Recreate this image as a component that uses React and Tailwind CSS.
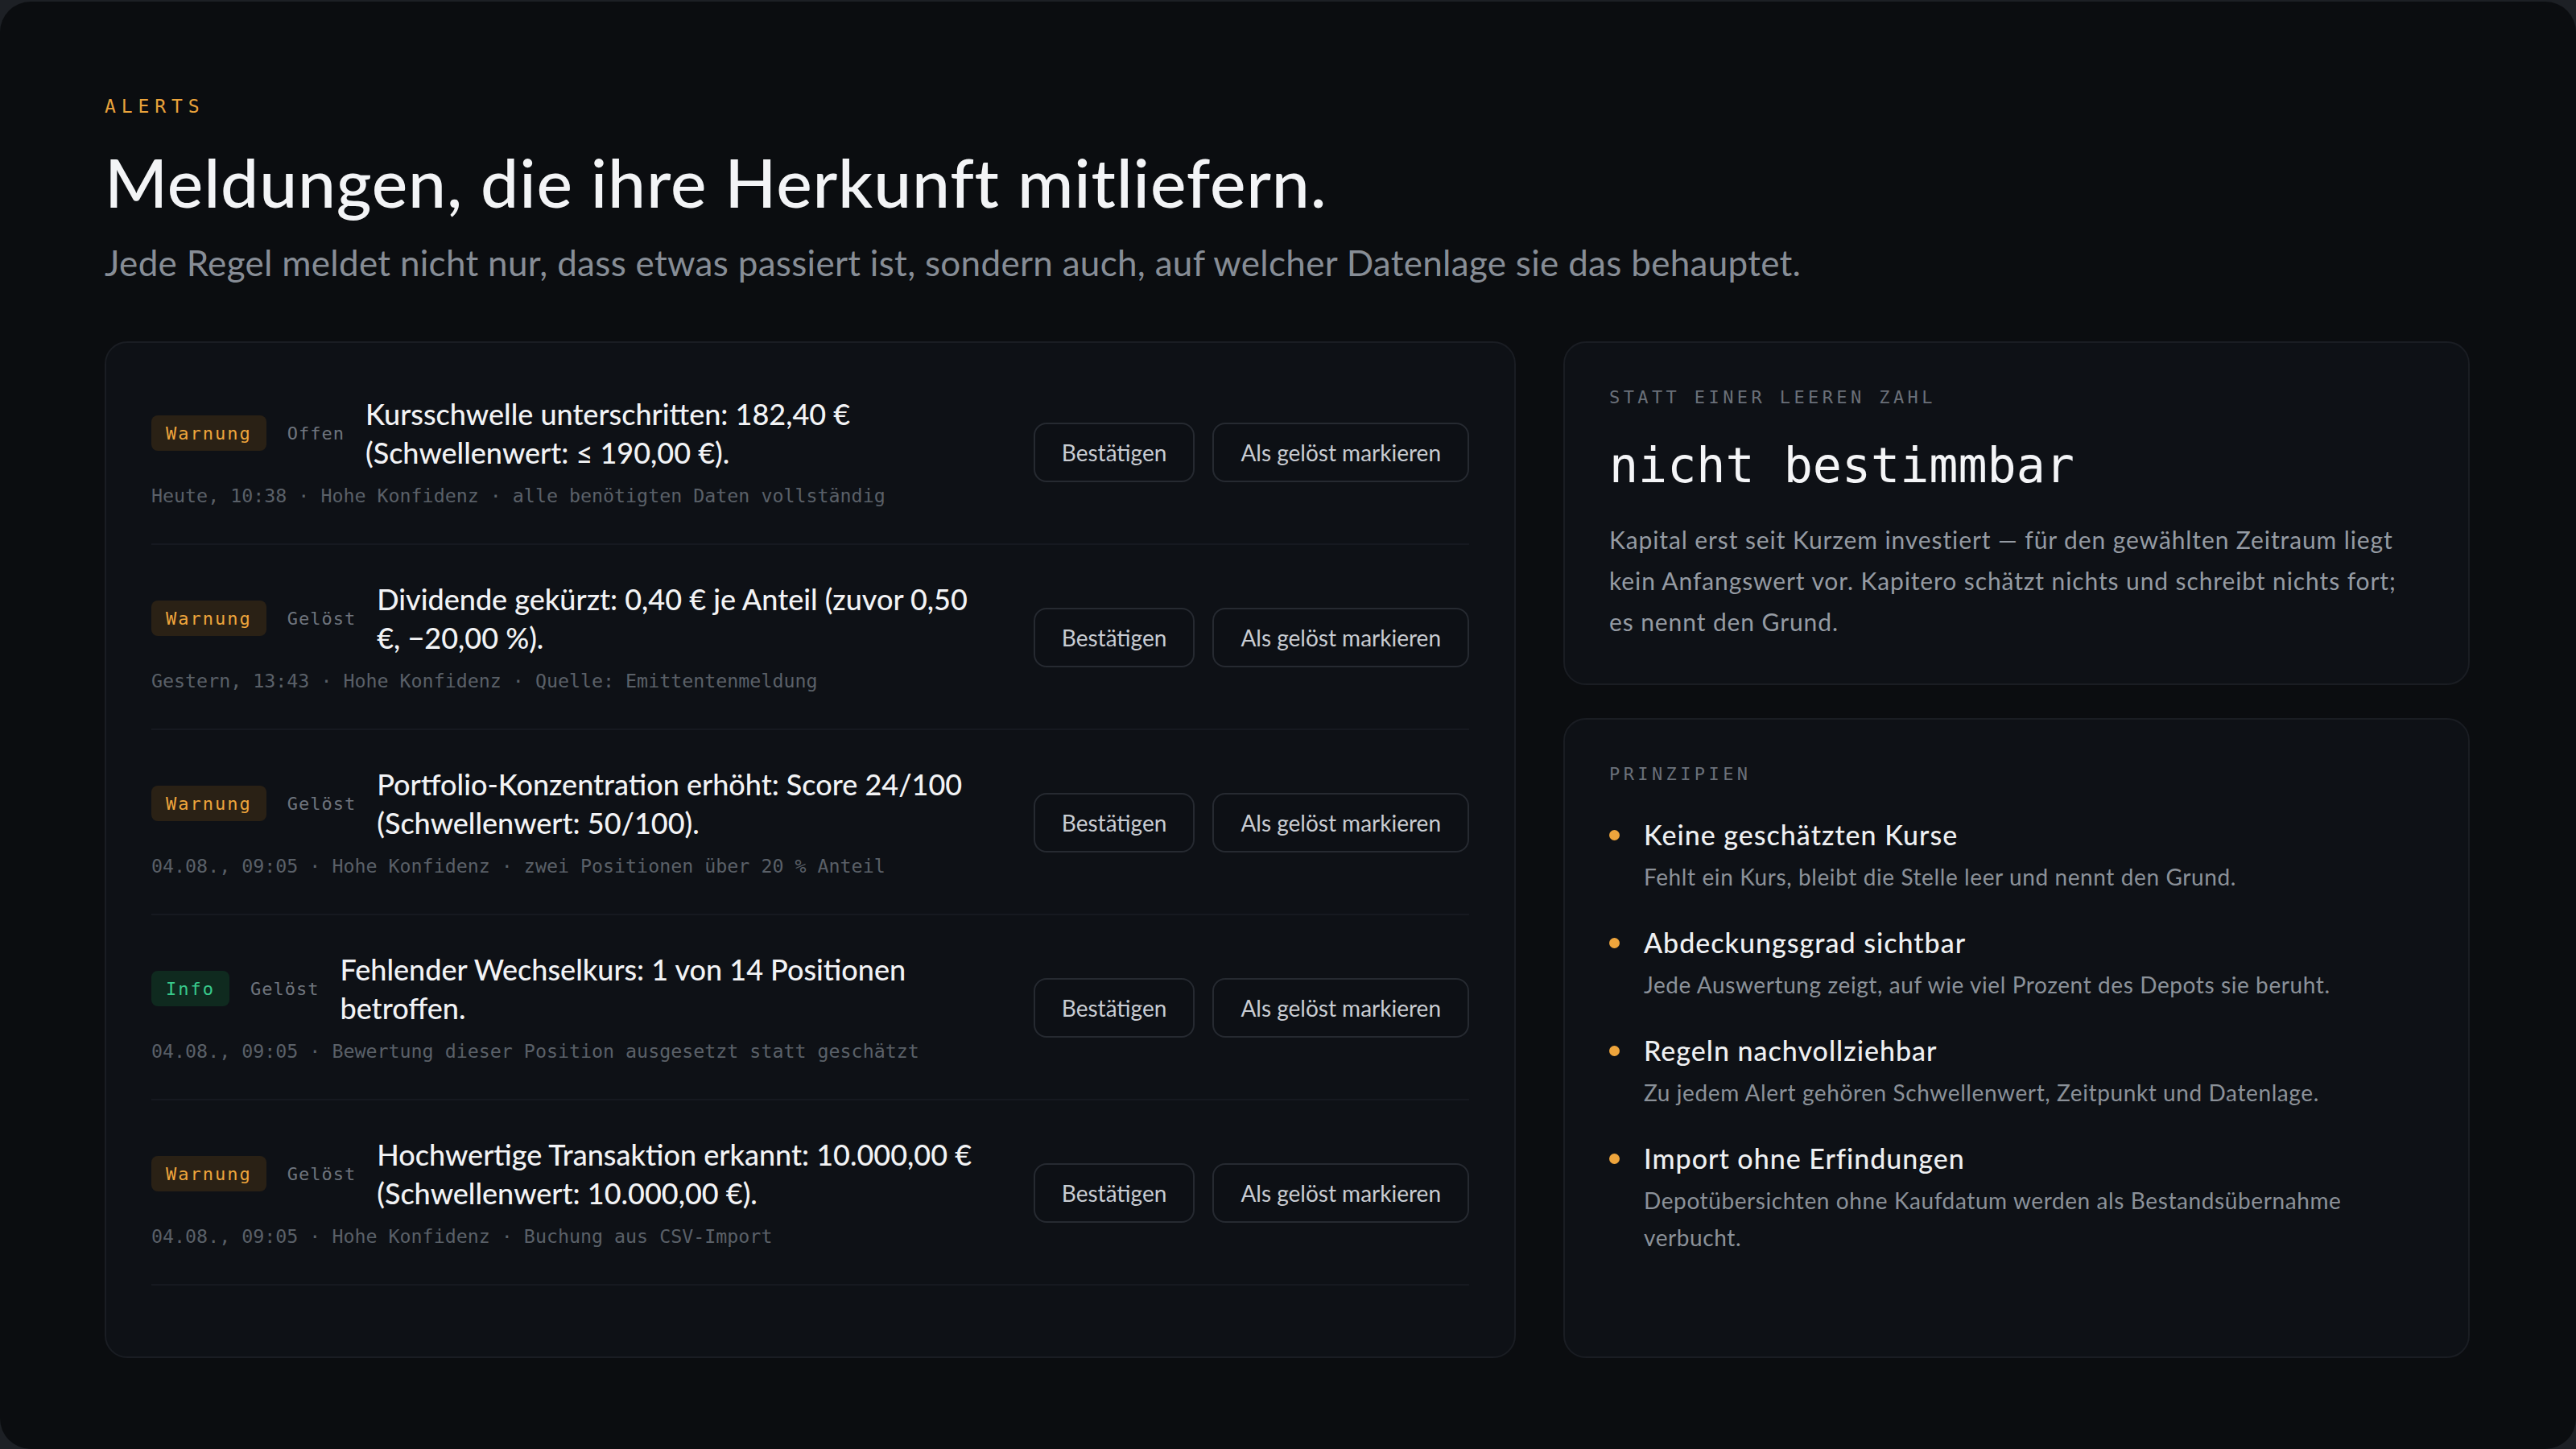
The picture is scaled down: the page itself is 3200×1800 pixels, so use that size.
const alerts = [
  {
    level: 'Warnung',
    status: 'Offen',
    title: 'Kursschwelle unterschritten: 182,40 € (Schwellenwert: ≤ 190,00 €).',
    meta: 'Heute, 10:38 · Hohe Konfidenz · alle benötigten Daten vollständig',
  },
  {
    level: 'Warnung',
    status: 'Gelöst',
    title: 'Dividende gekürzt: 0,40 € je Anteil (zuvor 0,50 €, −20,00 %).',
    meta: 'Gestern, 13:43 · Hohe Konfidenz · Quelle: Emittentenmeldung',
  },
  {
    level: 'Warnung',
    status: 'Gelöst',
    title: 'Portfolio-Konzentration erhöht: Score 24/100 (Schwellenwert: 50/100).',
    meta: '04.08., 09:05 · Hohe Konfidenz · zwei Positionen über 20 % Anteil',
  },
  {
    level: 'Info',
    status: 'Gelöst',
    title: 'Fehlender Wechselkurs: 1 von 14 Positionen betroffen.',
    meta: '04.08., 09:05 · Bewertung dieser Position ausgesetzt statt geschätzt',
  },
  {
    level: 'Warnung',
    status: 'Gelöst',
    title: 'Hochwertige Transaktion erkannt: 10.000,00 € (Schwellenwert: 10.000,00 €).',
    meta: '04.08., 09:05 · Hohe Konfidenz · Buchung aus CSV-Import',
  },
]

const principles = [
  {
    title: 'Keine geschätzten Kurse',
    text: 'Fehlt ein Kurs, bleibt die Stelle leer und nennt den Grund.',
  },
  {
    title: 'Abdeckungsgrad sichtbar',
    text: 'Jede Auswertung zeigt, auf wie viel Prozent des Depots sie beruht.',
  },
  {
    title: 'Regeln nachvollziehbar',
    text: 'Zu jedem Alert gehören Schwellenwert, Zeitpunkt und Datenlage.',
  },
  {
    title: 'Import ohne Erfindungen',
    text: 'Depotübersichten ohne Kaufdatum werden als Bestandsübernahme verbucht.',
  },
]

function LevelBadge({ level }) {
  const tone =
    level === 'Info'
      ? 'bg-[#0f2a1f] text-[#38c98b]'
      : 'bg-[#2a2115] text-[#eea53c]'
  return (
    <span
      className={`shrink-0 rounded-[8px] px-[18px] h-[44px] flex items-center font-['DejaVu_Sans_Mono',monospace] text-[22px] tracking-[2px] ${tone}`}
    >
      {level}
    </span>
  )
}

function ActionButton({ children }) {
  return (
    <button className="h-[74px] px-[33px] rounded-[16px] border-2 border-[#262a31] bg-[#0d1015] text-[28px] text-[#c8ccd2] whitespace-nowrap">
      {children}
    </button>
  )
}

function AlertRow({ alert }) {
  return (
    <div className="flex items-center gap-[60px] pt-[43px] pb-[41px] border-b-2 border-[#161920]">
      <div className="flex-1 min-w-0">
        <div className="flex items-center gap-[26px]">
          <LevelBadge level={alert.level} />
          <span className="shrink-0 font-['DejaVu_Sans_Mono',monospace] text-[22px] tracking-[1px] text-[#6f757e]">
            {alert.status}
          </span>
          <p className="text-[36px] leading-[48px] font-medium text-[#f2f3f5]">{alert.title}</p>
        </div>
        <p className="mt-[12px] font-['DejaVu_Sans_Mono',monospace] text-[23.3px] leading-[36px] text-[#5a6068]">
          {alert.meta}
        </p>
      </div>
      <div className="flex shrink-0 gap-[22px]">
        <ActionButton>Bestätigen</ActionButton>
        <ActionButton>Als gelöst markieren</ActionButton>
      </div>
    </div>
  )
}

export default function App() {
  return (
    <div className="w-[3200px] h-[1800px] pt-[2px] bg-[#1d2025] font-['Lato',sans-serif]">
      <div className="h-[1798px] rounded-[38px] bg-[#0b0d10] px-[130px] pt-[114px]">
        {/* Header */}
        <p className="font-['DejaVu_Sans_Mono',monospace] text-[23px] leading-[33px] tracking-[0.3em] text-[#e9a23b]">
          ALERTS
        </p>
        <h1 className="mt-[31px] text-[84px] leading-[92px] font-medium tracking-[0.01em] text-[#f3f4f6]">
          Meldungen, die ihre Herkunft mitliefern.
        </h1>
        <p className="mt-[25px] text-[44px] leading-[59px] tracking-[0.3px] text-[#878d96]">
          Jede Regel meldet nicht nur, dass etwas passiert ist, sondern auch, auf welcher Datenlage sie das behauptet.
        </p>

        <div className="mt-[68px] grid grid-cols-[1753px_1126px] gap-[59px] h-[1263px]">
          {/* Alert list */}
          <div className="rounded-[28px] border-2 border-[#1a1d23] bg-[#0e1116] px-[56px] pt-[21px]">
            {alerts.map((a, i) => (
              <AlertRow key={i} alert={a} />
            ))}
          </div>

          {/* Side column */}
          <div className="flex flex-col gap-[41px]">
            <div className="rounded-[28px] border-2 border-[#1a1d23] bg-[#0e1116] px-[55px] pt-[51px] pb-[51px]">
              <p className="font-['DejaVu_Sans_Mono',monospace] text-[22px] leading-[33px] tracking-[0.2em] text-[#6a7079]">
                STATT EINER LEEREN ZAHL
              </p>
              <p className="mt-[32px] font-['DejaVu_Sans_Mono',monospace] text-[60px] leading-[72px] text-[#f4f5f7]">
                nicht bestimmbar
              </p>
              <p className="mt-[31px] text-[30px] leading-[51px] tracking-[0.9px] text-[#959ba3]">
                Kapital erst seit Kurzem investiert — für den gewählten Zeitraum liegt kein Anfangswert vor. Kapitero schätzt nichts und schreibt nichts fort; es nennt den Grund.
              </p>
            </div>

            <div className="flex-1 rounded-[28px] border-2 border-[#1a1d23] bg-[#0e1116] px-[55px] pt-[51px]">
              <p className="font-['DejaVu_Sans_Mono',monospace] text-[22px] leading-[33px] tracking-[0.2em] text-[#6a7079]">
                PRINZIPIEN
              </p>
              <ul className="mt-[37px] flex flex-col gap-[37px]">
                {principles.map((p) => (
                  <li key={p.title} className="flex gap-[30px]">
                    <span className="mt-[16px] h-[13px] w-[13px] shrink-0 rounded-full bg-[#eea53c]" />
                    <div>
                      <p className="text-[34px] leading-[44px] font-medium tracking-[1px] text-[#eef0f2]">{p.title}</p>
                      <p className="mt-[7px] text-[28px] leading-[46px] tracking-[0.6px] text-[#8b9199]">{p.text}</p>
                    </div>
                  </li>
                ))}
              </ul>
            </div>
          </div>
        </div>
      </div>
    </div>
  )
}
